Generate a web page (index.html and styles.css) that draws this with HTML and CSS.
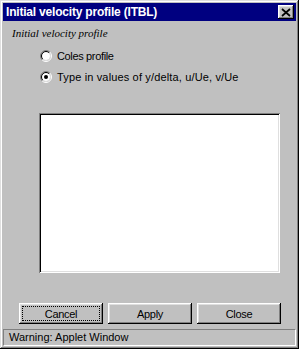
FILE: index.html
```html
<!DOCTYPE html>
<html lang="en">
<head>
    <meta charset="UTF-8">
    <title>Initial velocity profile (ITBL)</title>
    <link rel="stylesheet" href="styles.css">
</head>
<body>
    <div class="window">
        <div class="titlebar">
            <span class="title">Initial velocity profile (ITBL)</span>
            <button class="close-btn" aria-label="Close">
                <svg width="10" height="9" viewBox="0 0 10 9">
                    <path d="M1 1 L9 8 M9 1 L1 8" stroke="#000" stroke-width="1.7" fill="none"/>
                </svg>
            </button>
        </div>

        <div class="content">
            <div class="group-label">Initial velocity profile</div>

            <div class="radios">
                <label class="radio-row">
                    <svg class="radio" width="12" height="12" viewBox="0 0 12 12">
                        <path d="M2.1 9.9 A5.5 5.5 0 0 1 9.9 2.1" stroke="#808080" fill="none"/>
                        <path d="M9.9 2.1 A5.5 5.5 0 0 1 2.1 9.9" stroke="#fff" fill="none"/>
                        <circle cx="6" cy="6" r="4" fill="#fff"/>
                        <path d="M2.8 9.2 A4.5 4.5 0 0 1 9.2 2.8" stroke="#000" fill="none"/>
                        <path d="M9.2 2.8 A4.5 4.5 0 0 1 2.8 9.2" stroke="#dfdfdf" fill="none"/>
                    </svg>
                    <span>Coles profile</span>
                </label>
                <label class="radio-row">
                    <svg class="radio" width="12" height="12" viewBox="0 0 12 12">
                        <path d="M2.1 9.9 A5.5 5.5 0 0 1 9.9 2.1" stroke="#808080" fill="none"/>
                        <path d="M9.9 2.1 A5.5 5.5 0 0 1 2.1 9.9" stroke="#fff" fill="none"/>
                        <circle cx="6" cy="6" r="4" fill="#fff"/>
                        <path d="M2.8 9.2 A4.5 4.5 0 0 1 9.2 2.8" stroke="#000" fill="none"/>
                        <path d="M9.2 2.8 A4.5 4.5 0 0 1 2.8 9.2" stroke="#dfdfdf" fill="none"/>
                        <circle cx="6" cy="6" r="2" fill="#000"/>
                    </svg>
                    <span class="wide">Type in values of y/delta, u/Ue, v/Ue</span>
                </label>
            </div>

            <div class="text-area"></div>

            <div class="buttons">
                <button class="btn btn-focus"><span>Cancel</span></button>
                <button class="btn"><span>Apply</span></button>
                <button class="btn"><span>Close</span></button>
            </div>
        </div>

        <div class="statusbar">Warning: Applet Window</div>
    </div>
</body>
</html>
```

FILE: styles.css
```css
body {
    margin: 0;
    background-color: #c0c0c0;
    font-family: 'Liberation Sans', Arial, sans-serif;
    font-size: 11px;
    color: #000;
}
.window {
    box-sizing: border-box;
    width: 299px;
    height: 349px;
    padding: 3px;
    background-color: #c0c0c0;
    box-shadow: inset -1px -1px #000, inset 1px 1px #dfdfdf,
                inset -2px -2px #808080, inset 2px 2px #fff;
    display: flex;
    flex-direction: column;
}
.titlebar {
    height: 18px;
    background-color: #000080;
    color: #fff;
    display: flex;
    align-items: center;
    justify-content: space-between;
    padding: 0 2px 0 3px;
}
.title {
    font-weight: bold;
    font-size: 12px;
    letter-spacing: -0.2px;
}
.close-btn {
    box-sizing: border-box;
    width: 16px;
    height: 14px;
    padding: 0;
    border: none;
    background-color: #c0c0c0;
    box-shadow: inset -1px -1px #000, inset 1px 1px #fff,
                inset -2px -2px #808080, inset 2px 2px #dfdfdf;
    display: flex;
    align-items: center;
    justify-content: center;
}
.content {
    display: flex;
    flex-direction: column;
}
.group-label {
    font-family: 'Liberation Serif', 'Times New Roman', serif;
    font-style: italic;
    font-size: 11px;
    line-height: 13px;
    margin: 6px 0 0 9px;
}
.radios {
    margin: 5px 0 0 37px;
    display: flex;
    flex-direction: column;
}
.radio-row {
    height: 21px;
    display: flex;
    align-items: center;
    gap: 5px;
    letter-spacing: -0.35px;
}
.radio-row .wide {
    letter-spacing: 0.15px;
}
.text-area {
    box-sizing: border-box;
    width: 241px;
    height: 160px;
    margin: 26px 0 0 36px;
    background-color: #fff;
    box-shadow: inset 1px 1px #808080, inset -1px -1px #fff,
                inset 2px 2px #000, inset -2px -2px #dfdfdf;
}
.buttons {
    display: flex;
    gap: 5px;
    margin: 30px 0 0 16px;
}
.btn {
    box-sizing: border-box;
    width: 84px;
    height: 21px;
    padding: 3px;
    border: none;
    background-color: #c0c0c0;
    font-family: 'Liberation Sans', Arial, sans-serif;
    font-size: 11px;
    letter-spacing: -0.3px;
    color: #000;
    box-shadow: inset -1px -1px #000, inset 1px 1px #fff,
                inset -2px -2px #808080, inset 2px 2px #dfdfdf;
}
.btn span {
    box-sizing: border-box;
    display: flex;
    align-items: center;
    justify-content: center;
    height: 100%;
    border: 1px dotted transparent;
}
.btn-focus span {
    border-color: #000;
}
.statusbar {
    box-sizing: border-box;
    height: 17px;
    margin-top: 5px;
    padding: 0 5px;
    line-height: 15px;
    border: 1px solid;
    border-color: #808080 #fff #fff #808080;
}
```
